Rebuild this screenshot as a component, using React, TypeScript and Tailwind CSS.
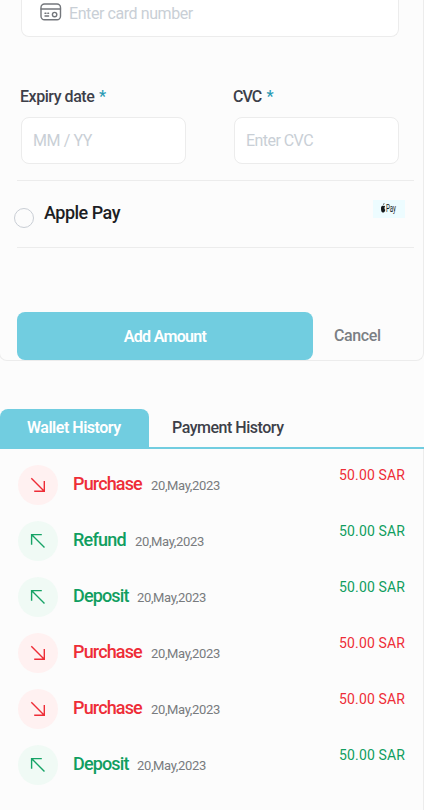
import React from "react";

type Kind = "Purchase" | "Refund" | "Deposit";

const rows: Kind[] = ["Purchase", "Refund", "Deposit", "Purchase", "Purchase", "Deposit"];

const titleTracking: Record<Kind, string> = {
  Purchase: "w-[69px] tracking-[-0.85px]",
  Refund: "w-[53px] tracking-[-0.75px]",
  Deposit: "w-[55px] tracking-[-0.85px]",
};

function CardIcon() {
  return (
    <svg width="22" height="18" viewBox="0 0 22 18" fill="none" stroke="#74777c" strokeWidth="1.4" strokeLinecap="round">
      <rect x="1" y="1" width="19.5" height="15.8" rx="3.5" />
      <path d="M1 6h19.5M5 10.3h1M7.8 10.3h.8M5 13h3.6" />
      <circle cx="14.6" cy="11.6" r="2.2" />
    </svg>
  );
}

function DiagonalArrow({ out }: { out: boolean }) {
  return (
    <svg width="16" height="16" viewBox="0 0 16 16" fill="none" stroke={out ? "#ee2d37" : "#15a366"} strokeWidth="1.4">
      {out ? <path d="M1.3 1.3L14 14M14.3 4V14.3H4.2" /> : <path d="M14.5 14.5L2 2M1.6 11.8V1.6H11.8" />}
    </svg>
  );
}

function ApplePayBadge() {
  return (
    <svg className="block" width="32" height="18" viewBox="0 0 32 18">
      <rect width="32" height="18" fill="#edfcff" />
      <path d="M10.3 5C10.2 4 10.7 3.3 11.3 3 11.5 4 11 4.7 10.3 5ZM8 8.7C8 6.3 9 5.5 10.1 6 10.9 5.5 11.8 5.7 12.1 6.4 11.2 7.2 11.3 9 12.3 9.8 11.9 11.8 11 13 10.2 12.5 8.9 13.1 8 11 8 8.7Z" fill="#151a1c" />
      <text x="13" y="12.4" fontSize="10" fontFamily="Roboto, sans-serif" fill="#151a1c" textLength="10" lengthAdjust="spacingAndGlyphs">Pay</text>
    </svg>
  );
}

export default function App() {
  return (
    <div className="h-[810px] w-[424px] overflow-hidden bg-[#fcfcfc] font-['Roboto',sans-serif] whitespace-nowrap text-[#3d3f49]">
      <section className="-ml-px h-[361px] w-[425px] rounded-b-lg border border-t-0 border-[#ececec]">
        <div className="ml-[21px] flex h-[37px] w-[378px] rounded-b-lg border border-t-0 border-[#ececec] bg-white pl-[18px]">
          <div className="mt-[3px]"><CardIcon /></div>
          <span className="mt-0.5 ml-[7px] text-base leading-6 tracking-[-0.42px] text-[#c9cfd6]">Enter card number</span>
        </div>

        <div className="flex gap-12 pt-12 pl-[21px]">
          <div className="w-[165px]">
            <div className="-ml-px text-base leading-6 font-medium tracking-[-0.45px]">
              Expiry date <span className="ml-px text-[#2a9ab4]">*</span>
            </div>
            <div className="mt-2 flex h-[47px] items-center rounded-lg border border-[#ececec] bg-white pl-[11px] text-base tracking-[-0.4px] text-[#c9cfd6]">MM / YY</div>
          </div>
          <div className="w-[165px]">
            <div className="-ml-px text-base leading-6 font-medium tracking-[-0.9px]">
              CVC <span className="ml-0.5 text-[#2a9ab4]">*</span>
            </div>
            <div className="mt-2 flex h-[47px] items-center rounded-lg border border-[#ececec] bg-white pl-[11px] text-base tracking-[-0.55px] text-[#c9cfd6]">Enter CVC</div>
          </div>
        </div>

        <div className="mt-4 ml-[17px] flex h-[68px] w-[397px] border-y border-[#ececec]">
          <div className="mt-[27px] -ml-[3px] size-5 rounded-full border border-[#c9ced5]" />
          <span className="mt-5 ml-2.5 grow text-lg leading-6 font-medium tracking-[-0.5px] text-[#1d1e24]">Apple Pay</span>
          <div className="mt-[19px] mr-[9px]"><ApplePayBadge /></div>
        </div>

        <div className="mt-16 ml-[17px] flex h-12">
          <button className="h-12 w-[296px] rounded-lg bg-[#71cde0] pt-0.5 text-base font-semibold tracking-[-0.7px] text-white">Add Amount</button>
          <button className="ml-[21px] text-base font-medium tracking-[-0.4px] text-[#7b7f84]">Cancel</button>
        </div>
      </section>

      <section className="pt-12">
        <div className="flex h-10 border-b-2 border-[#71cde0]">
          <div className="h-10 w-[149px] rounded-t-lg bg-[#71cde0] pt-[7px] pl-[27px] text-base leading-6 font-semibold tracking-[-0.48px] text-white">Wallet History</div>
          <div className="pt-[7px] pl-[23px] text-base leading-6 font-medium tracking-[-0.48px]">Payment History</div>
        </div>
        <ul className="h-[361px] border-r border-[#ececec] pt-4">
          {rows.map((kind, i) => {
            const out = kind === "Purchase";
            return (
              <li key={i} className="flex h-14 pl-[18px]">
                <div className={`flex size-10 items-center justify-center rounded-full ${out ? "bg-[#fff1f1]" : "bg-[#f0faf5]"}`}>
                  <DiagonalArrow out={out} />
                </div>
                <span className={`mt-[7px] ml-[15px] text-lg leading-6 font-medium ${titleTracking[kind]} ${out ? "text-[#ee2d37]" : "text-[#109e60]"}`}>{kind}</span>
                <span className="mt-[9px] ml-[9px] grow text-[13px] leading-6 tracking-[-0.35px] text-[#787b7e]">20,May,2023</span>
                <span className={`-mt-0.5 w-[84px] text-sm leading-6 tracking-[0.15px] ${out ? "text-[#ee2d37]" : "text-[#109e60]"}`}>50.00 SAR</span>
              </li>
            );
          })}
        </ul>
      </section>
    </div>
  );
}
